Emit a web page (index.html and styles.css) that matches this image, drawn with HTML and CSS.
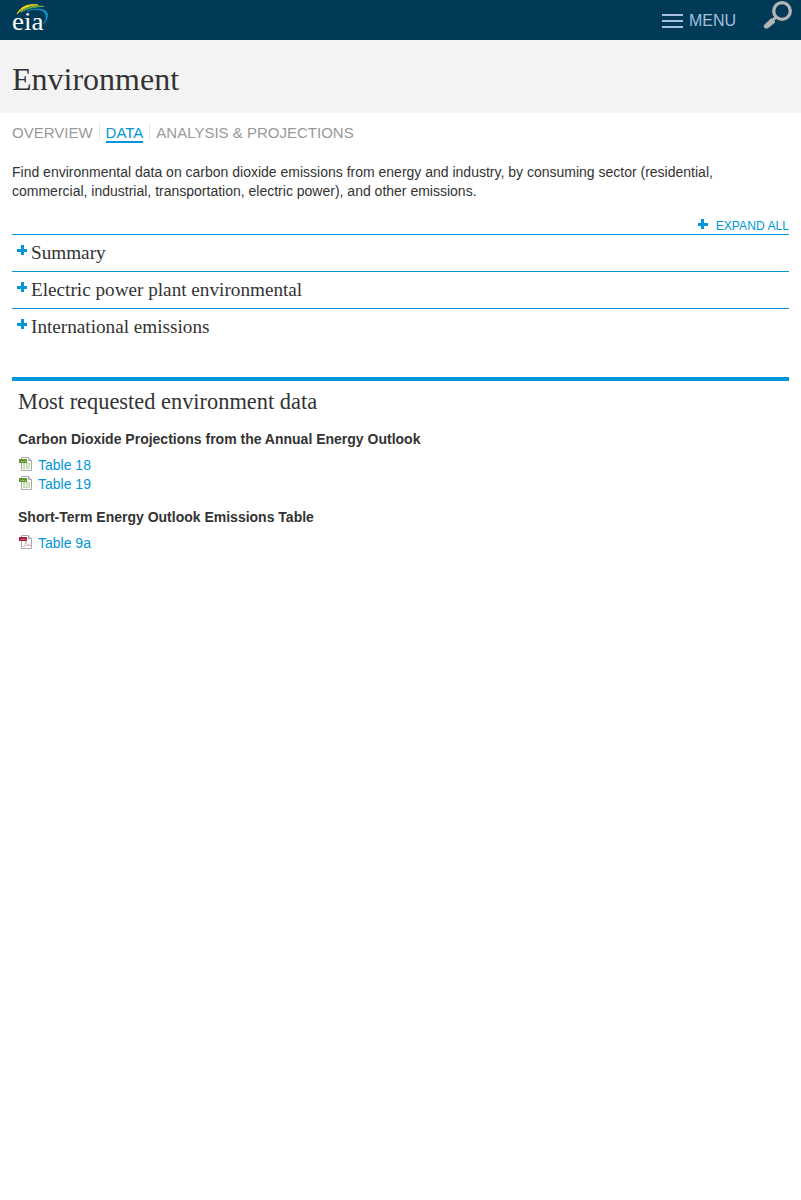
FILE: index.html
```html
<!DOCTYPE html>
<html lang="en">
<head>
<meta charset="utf-8">
<title>Environment - Data - EIA</title>
<link rel="stylesheet" href="styles.css">
</head>
<body>
<header class="topbar">
  <a class="logo" aria-label="eia">
    <svg width="40" height="34" viewBox="0 0 40 34">
      <path d="M5 14C9 6 17 3.500 26 5C18 5 11 8 5 14Z" fill="#e8d31c" stroke="#e8d31c" stroke-width=".9"/>
      <path d="M9 12C16 6.500 24 5 32 6.500C24 6.500 16 8 9 12Z" fill="#68ad45" stroke="#68ad45" stroke-width="1"/>
      <path d="M15 11.500C22 8.500 30 9 33 13C35 17 34 20 31.500 24C37 18 37 12 32 10C26 8 20 9 15 11.500Z" fill="#1593cf" stroke="#1593cf" stroke-width=".6"/>
      <text class="logo-text" x="0" y="29.500" textLength="31.500" lengthAdjust="spacingAndGlyphs">eia</text>
    </svg>
  </a>
  <a class="menu"><span class="bars"></span><span>MENU</span></a>
  <svg class="search" width="30" height="30" viewBox="0 0 30 30">
    <circle cx="19" cy="11" r="8.300" fill="none" stroke="#b5b5b5" stroke-width="3.300"/>
    <path d="M13 17L10 20" stroke="#b5b5b5" stroke-width="3"/>
    <path d="M8.500 18.500L12 22L5.500 27.500Q3 29 1.500 27.500Q.5 26 2 24.500Z" fill="#b5b5b5" stroke="#b5b5b5" stroke-linejoin="round"/>
  </svg>
</header>
<div class="title"><h1>Environment</h1></div>
<main>
  <nav class="tabs"><a>OVERVIEW</a><a><span class="current">DATA</span></a><a>ANALYSIS &amp; PROJECTIONS</a></nav>
  <p class="intro">Find environmental data on carbon dioxide emissions from energy and industry, by consuming sector (residential, commercial, industrial, transportation, electric power), and other emissions.</p>
  <div class="expand"><i class="plus"></i><span>EXPAND ALL</span></div>
  <section class="accordion">
    <h2><i class="plus"></i>Summary</h2>
    <h2><i class="plus"></i>Electric power plant environmental</h2>
    <h2><i class="plus"></i>International emissions</h2>
  </section>
  <section class="requested">
    <h2>Most requested environment data</h2>
    <h3>Carbon Dioxide Projections from the Annual Energy Outlook</h3>
    <ul>
      <li><svg class="file" width="14" height="14" viewBox="0 0 14 14"><path d="M2.500.5H9.500L12.500 3.500V13.500H2.500Z" fill="#fff" stroke="#aaa"/><path d="M9.500.5V3.500H12.500" fill="#ddd" stroke="#aaa"/><path d="M4 6h7v6H4Z" fill="#b9d6a0"/><path d="M4 8h7M4 10h7M6.500 6v6M9 6v6" stroke="#edf5e7" stroke-width=".7"/><path d="M0 2h8v4H0Z" fill="#5f9732"/><path d="M2 4.500h1M4 4.500h1M6 4.500h1" stroke="#a9cd89"/></svg><a>Table 18</a></li>
      <li><svg class="file" width="14" height="14" viewBox="0 0 14 14"><path d="M2.500.5H9.500L12.500 3.500V13.500H2.500Z" fill="#fff" stroke="#aaa"/><path d="M9.500.5V3.500H12.500" fill="#ddd" stroke="#aaa"/><path d="M4 6h7v6H4Z" fill="#b9d6a0"/><path d="M4 8h7M4 10h7M6.500 6v6M9 6v6" stroke="#edf5e7" stroke-width=".7"/><path d="M0 2h8v4H0Z" fill="#5f9732"/><path d="M2 4.500h1M4 4.500h1M6 4.500h1" stroke="#a9cd89"/></svg><a>Table 19</a></li>
    </ul>
    <h3 class="second">Short-Term Energy Outlook Emissions Table</h3>
    <ul>
      <li><svg class="file" width="14" height="14" viewBox="0 0 14 14"><path d="M2.500.5H9.500L12.500 3.500V13.500H2.500Z" fill="#fff" stroke="#aaa"/><path d="M9.500.5V3.500H12.500" fill="#ddd" stroke="#aaa"/><path d="M4 12C6 10 7 8 6.500 6C7 9 9 10.500 12 10.500C9 9.500 6 10.500 4 12" fill="none" stroke="#dc9daa" stroke-width=".8"/><path d="M0 2h8v4H0Z" fill="#ad2440"/><path d="M2 4.500h1M4 4.500h1M6 4.500h1" stroke="#d48797"/></svg><a>Table 9a</a></li>
    </ul>
  </section>
</main>
</body>
</html>
```
FILE: styles.css
```css
* { box-sizing: border-box; }
body { margin: 0; background: #fff; color: #333; font: 14px/19px "Liberation Sans", Arial, sans-serif; }
h1, h2, h3, p, ul { margin: 0; padding: 0; font-weight: normal; }
h1, h2, .logo-text { font-family: "Liberation Serif", "Times New Roman", serif; }
.topbar { height: 40px; background: #003a57; display: flex; align-items: flex-start; padding: 0 8px 0 12px; }
.logo { margin-right: auto; height: 34px; }
.logo svg { display: block; }
.logo-text { font-size: 25px; fill: #fff; }
.menu { display: flex; gap: 6px; margin-right: 27px; padding-top: 11px; font-size: 16px; color: #a5bfdd; }
.bars { width: 21px; height: 14px; margin-top: 3px; background: repeating-linear-gradient(#a5bfdd 0 2px, transparent 2px 6px); }
.search { display: block; }
.title { height: 73px; background: #f3f3f3; padding: 19px 12px 0; }
h1 { font-size: 32px; line-height: 40px; }
main { padding: 10px 12px 0; }
.tabs { display: flex; font-size: 15px; line-height: 20px; color: #999; height: 39px; }
.tabs a { padding: 0 6px; border-left: 1px solid #e6e6e6; height: 18px; }
.tabs a:first-child { padding-left: 0; border: 0; }
.current { display: block; height: 20px; color: #0096d7; border-bottom: 2px solid #0096d7; }
.intro { padding-top: 1px; }
.plus { display: block; flex: none; width: 10px; height: 10px; background: linear-gradient(#0096d7, #0096d7) center / 10px 3px no-repeat, linear-gradient(#0096d7, #0096d7) center / 3px 10px no-repeat; }
.expand { display: flex; justify-content: flex-end; gap: 8px; height: 33px; padding-top: 17px; font-size: 12.150px; line-height: 16px; color: #0096d7; }
.expand .plus { margin-top: 1px; }
.accordion h2 { display: flex; gap: 4px; height: 37px; border-top: 1px solid #0096d7; padding-left: 5px; font-size: 19.2px; line-height: 36px; }
.accordion .plus { margin-top: 10px; }
.requested { margin-top: 32px; border-top: 4px solid #0096d7; padding: 8px 6px 0; }
.requested h2 { font-size: 22.4px; line-height: 26px; }
h3 { font-size: 14px; font-weight: bold; margin-top: 15px; line-height: 19px; }
ul { list-style: none; margin-top: 7px; }
li { display: flex; gap: 5px; height: 19px; padding-left: 1px; color: #0096d7; }
.file { display: block; margin-top: 1px; }
.second { margin-top: 14px; }
```
